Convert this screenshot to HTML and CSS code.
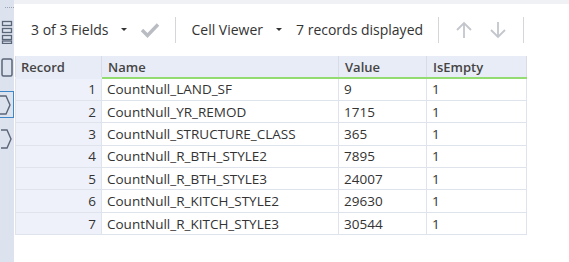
FILE: index.html
```html
<!DOCTYPE html>
<html lang="en">
<head>
    <meta charset="UTF-8">
    <title>Results</title>
    <link rel="stylesheet" href="styles.css">
</head>
<body>

<div class="window">
    <!-- barra lateral de icones -->
    <div class="side">
        <div class="grip"></div>
        <svg class="side-icon list" width="12" height="24" viewBox="0 0 12 24">
            <rect x="1.5" y="1.5" width="9" height="4" fill="none" stroke="#5a6577" stroke-width="1.3"/>
            <rect x="1.5" y="8.5" width="9" height="4" fill="none" stroke="#5a6577" stroke-width="1.3"/>
            <rect x="1.5" y="15.5" width="9" height="4" fill="none" stroke="#5a6577" stroke-width="1.3"/>
            <rect x="1.5" y="21" width="9" height="2.5" fill="none" stroke="#5a6577" stroke-width="1.3"/>
        </svg>
        <svg class="side-icon box" width="12" height="19" viewBox="0 0 12 19">
            <rect x="1" y="1" width="10" height="17" rx="1.5" fill="none" stroke="#5a6577" stroke-width="1.5"/>
        </svg>
        <div class="side-sel">
            <svg width="12" height="22" viewBox="0 0 12 22">
                <path d="M0 2 L6 2 L10 11 L6 20 L0 20" fill="none" stroke="#5a6577" stroke-width="1.4"/>
            </svg>
        </div>
        <svg class="side-icon hex" width="12" height="22" viewBox="0 0 12 22">
            <path d="M0 2 L6 2 L10 11 L6 20 L0 20" fill="none" stroke="#5a6577" stroke-width="1.4"/>
        </svg>
    </div>

    <div class="main">
        <div class="toolbar">
            <span class="tb-text">3 of 3 Fields</span>
            <span class="caret"></span>
            <svg class="check" width="20" height="16" viewBox="0 0 20 16">
                <path d="M2 8 L7.5 13.5 L18 2.5" fill="none" stroke="#b9bcc2" stroke-width="3.4"/>
            </svg>
            <span class="sep"></span>
            <span class="tb-text">Cell Viewer</span>
            <span class="caret"></span>
            <span class="tb-text">7 records displayed</span>
            <span class="sep"></span>
            <svg class="arrow up" width="20" height="20" viewBox="0 0 20 20">
                <path d="M10 18 V3 M3 10 L10 3 L17 10" fill="none" stroke="#c3c6cc" stroke-width="1.8"/>
            </svg>
            <svg class="arrow" width="20" height="20" viewBox="0 0 20 20">
                <path d="M10 2 V17 M3 10 L10 17 L17 10" fill="none" stroke="#c3c6cc" stroke-width="1.8"/>
            </svg>
            <span class="sep"></span>
        </div>

        <table class="grid">
            <thead>
                <tr>
                    <th class="rec">Record</th>
                    <th class="name">Name</th>
                    <th class="val">Value</th>
                    <th class="emp">IsEmpty</th>
                </tr>
            </thead>
            <tbody>
                <tr><td class="rec">1</td><td>CountNull_LAND_SF</td><td>9</td><td>1</td></tr>
                <tr><td class="rec">2</td><td>CountNull_YR_REMOD</td><td>1715</td><td>1</td></tr>
                <tr><td class="rec">3</td><td>CountNull_STRUCTURE_CLASS</td><td>365</td><td>1</td></tr>
                <tr><td class="rec">4</td><td>CountNull_R_BTH_STYLE2</td><td>7895</td><td>1</td></tr>
                <tr><td class="rec">5</td><td>CountNull_R_BTH_STYLE3</td><td>24007</td><td>1</td></tr>
                <tr><td class="rec">6</td><td>CountNull_R_KITCH_STYLE2</td><td>29630</td><td>1</td></tr>
                <tr><td class="rec">7</td><td>CountNull_R_KITCH_STYLE3</td><td>30544</td><td>1</td></tr>
            </tbody>
        </table>
    </div>
</div>

</body>
</html>
```

FILE: styles.css
```css
body {
    margin: 0;
    padding: 0;
    font-family: "Open Sans", "Noto Sans", sans-serif;
    background-color: #ffffff;
    color: #333;
}

.window {
    display: flex;
    width: 569px;
    height: 262px;
    overflow: hidden;
}

.side {
    width: 14px;
    background-color: #dce2ee;
    display: flex;
    flex-direction: column;
    align-items: flex-start;
    flex-shrink: 0;
}

.grip {
    width: 9px;
    height: 4px;
    border-top: 1px dotted #9aa3b3;
    margin: 7px 0 0 5px;
}

.side-icon {
    display: block;
    margin-left: 1px;
}

.side-icon.list {
    margin-top: 8px;
}

.side-icon.box {
    margin-top: 14px;
}

.side-sel {
    margin-top: 14px;
    width: 13px;
    height: 25px;
    border: 1px solid #3f86c9;
    border-left: none;
    display: flex;
    align-items: center;
}

.side-icon.hex {
    margin-top: 10px;
}

.main {
    flex: 1;
    display: flex;
    flex-direction: column;
    border-top: 4px solid #f0f1f4;
}

.toolbar {
    height: 52px;
    display: flex;
    align-items: center;
    padding-left: 17px;
    padding-bottom: 1px;
    font-size: 14px;
    color: #333;
    box-sizing: border-box;
}

.tb-text {
    white-space: nowrap;
}

.caret {
    width: 0;
    height: 0;
    border-left: 3px solid transparent;
    border-right: 3px solid transparent;
    border-top: 3px solid #333;
    margin: 0 14px 0 13px;
}

.check {
    margin-left: -1px;
}

.sep {
    width: 1px;
    height: 26px;
    background-color: #d4d6da;
    margin: 0 15px;
}

.arrow.up {
    margin-right: 14px;
}

.grid {
    border-collapse: collapse;
    margin-left: 1px;
    font-size: 13.5px;
    table-layout: fixed;
    width: 512px;
}

.grid th,
.grid td {
    box-sizing: border-box;
}

.grid th {
    background-color: #e8ecf6;
    text-align: left;
    font-weight: 600;
    color: #444;
    height: 22px;
    padding: 0 6px;
    border-right: 1px solid #d7dce7;
    font-size: 13px;
}

.grid th.name,
.grid th.val,
.grid th.emp {
    border-bottom: 2px solid #93dc72;
}

.grid th.rec {
    width: 86px;
    padding-left: 5px;
    border-left: 1px solid #d7dce7;
    border-bottom: 2px solid #e8ecf6;
}

.grid th.name {
    width: 237px;
}

.grid th.val {
    width: 88px;
}

.grid td {
    height: 22.4px;
    padding: 0 5px;
    border: 1px solid #dfe3ec;
    border-top: none;
    white-space: nowrap;
    color: #333;
}

.grid td.rec {
    background-color: #eef1fa;
    text-align: right;
    padding-right: 5px;
}
```
